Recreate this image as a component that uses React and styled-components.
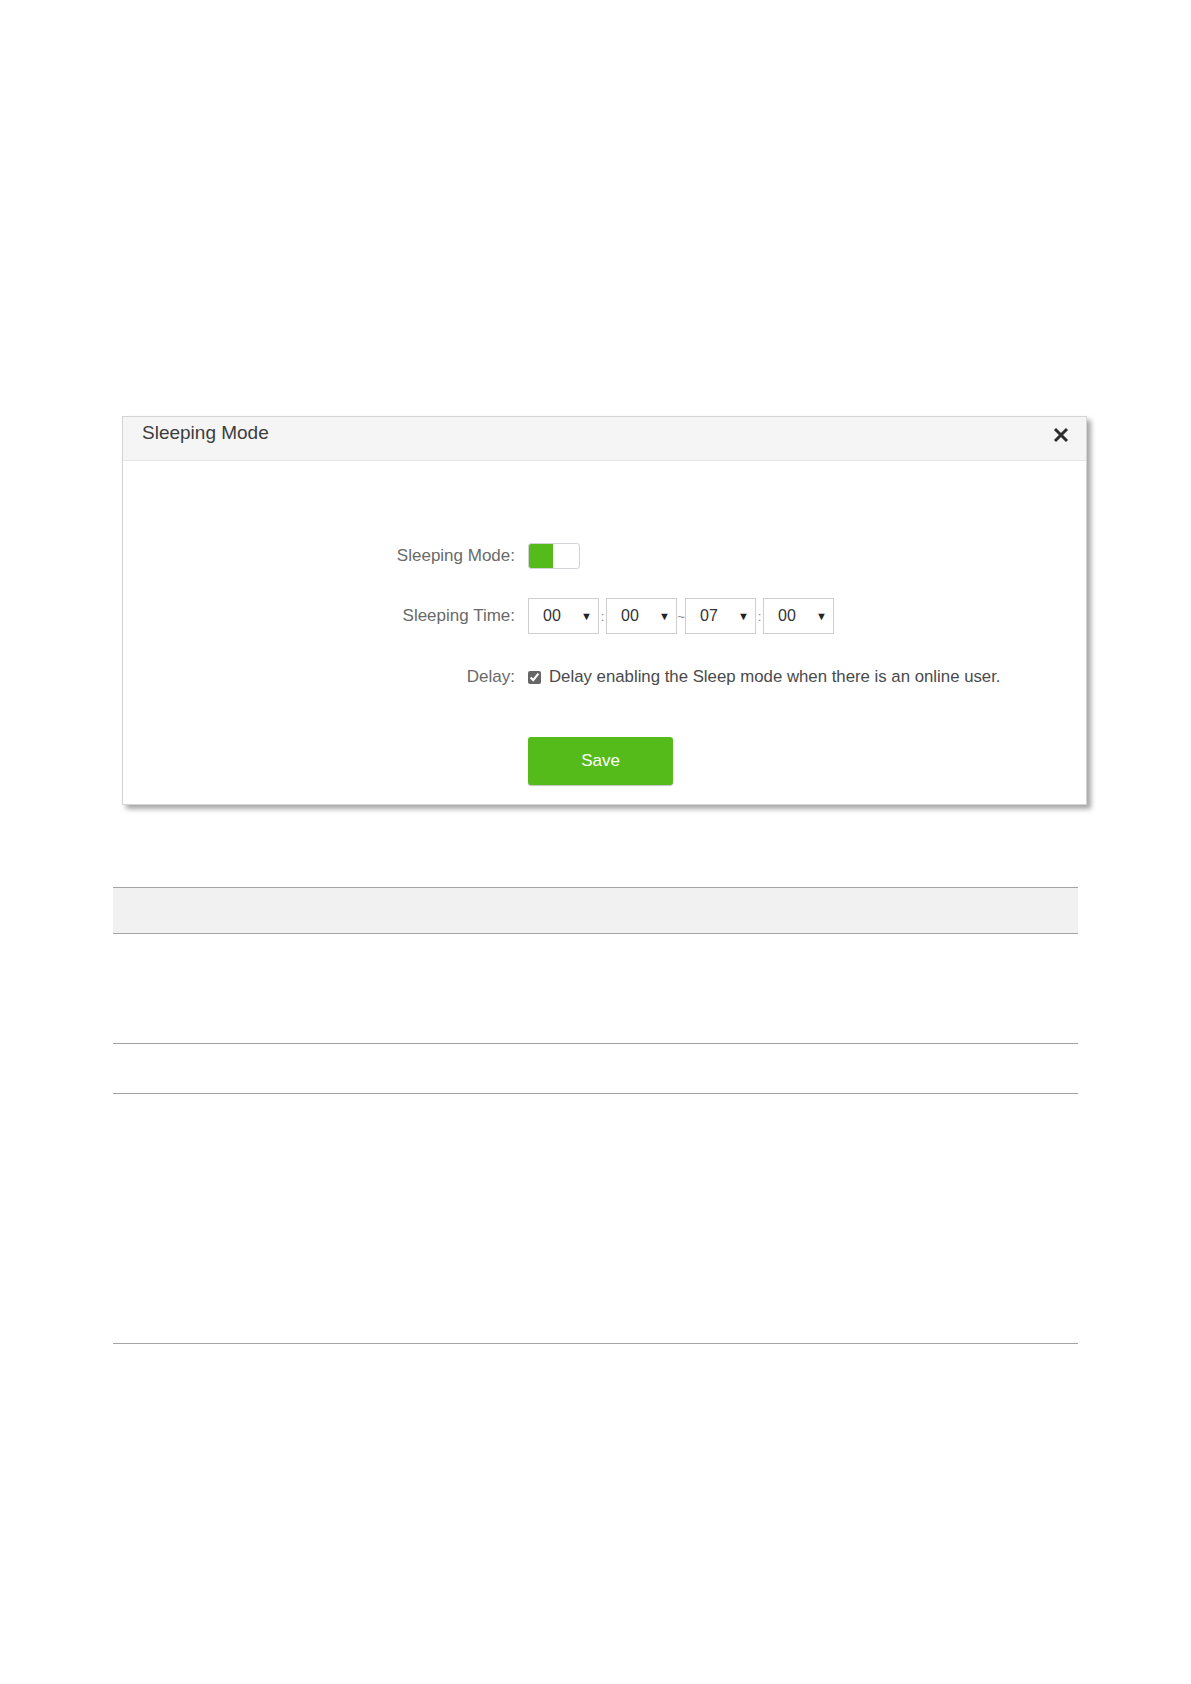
import React from "react";
import styled, { createGlobalStyle } from "styled-components";

const GlobalStyle = createGlobalStyle`
  html, body {
    margin: 0;
    padding: 0;
    background: #ffffff;
  }
  body {
    font-family: "Liberation Sans", Arial, sans-serif;
  }
`;

const Page = styled.div`
  width: 1191px;
  min-height: 1684px;
  display: flex;
  flex-direction: column;
  padding-top: 416px;
  box-sizing: border-box;
`;

const Dialog = styled.div`
  margin-left: 122px;
  width: 965px;
  box-sizing: border-box;
  border: 1px solid #d4d4d4;
  background: #fff;
  box-shadow: 4px 4px 5px rgba(0, 0, 0, 0.35);
`;

const Header = styled.div`
  height: 43px;
  display: flex;
  align-items: center;
  justify-content: space-between;
  padding: 0 16px 0 19px;
  background: #f5f5f5;
  border-bottom: 1px solid #e6e6e6;
`;

const Title = styled.h2`
  margin: 0;
  margin-top: -11px;
  font-size: 19px;
  font-weight: normal;
  color: #3d3d3d;
`;

const Close = styled.button`
  border: none;
  background: none;
  padding: 0;
  margin-top: -7px;
  width: 18px;
  height: 18px;
  display: flex;
  align-items: center;
  justify-content: center;
  cursor: pointer;
`;

const Body = styled.div`
  padding: 77px 0 19px;
`;

const Form = styled.div`
  display: grid;
  grid-template-columns: 392px 1fr;
  column-gap: 13px;
`;

const Row = styled.div`
  display: contents;
`;

const Label = styled.div`
  height: 36px;
  margin-bottom: ${(p) => p.$gap || 24}px;
  display: flex;
  align-items: center;
  justify-content: flex-end;
  font-size: 17px;
  color: #6a6a6a;
`;

const Field = styled.div`
  height: 36px;
  margin-bottom: ${(p) => p.$gap || 24}px;
  display: flex;
  align-items: center;
`;

const Toggle = styled.div`
  width: 50px;
  height: 24px;
  border: 1px solid #d0d4d8;
  border-radius: 3px;
  overflow: hidden;
  display: flex;
  background: #fff;
`;

const ToggleOn = styled.div`
  width: 24px;
  background: #55bb1a;
`;

const Select = styled.div`
  width: 71px;
  height: 36px;
  box-sizing: border-box;
  border: 1px solid #cfcfcf;
  display: flex;
  align-items: center;
  justify-content: space-between;
  padding: 0 6px 0 14px;
  font-size: 16px;
  color: #333;
  background: #fff;
`;

const Arrow = styled.span`
  font-size: 11px;
  color: #222;
`;

const Sep = styled.span`
  width: ${(p) => p.$w || 7}px;
  text-align: center;
  font-size: 13px;
  color: #888;
`;

const Check = styled.input`
  width: 13px;
  height: 13px;
  margin: 0 8px 0 0;
  accent-color: #666;
`;

const DelayText = styled.span`
  font-size: 16.8px;
  color: #4a4a4a;
`;

const SaveButton = styled.button`
  width: 145px;
  height: 48px;
  border: none;
  border-radius: 3px;
  background: #55bb1a;
  box-shadow: 0 1px 1px rgba(0, 0, 0, 0.25);
  color: #fff;
  font-family: inherit;
  font-size: 17px;
  cursor: pointer;
`;

const Table = styled.table`
  margin: 82px 0 0 113px;
  width: 965px;
  border-collapse: collapse;
`;

const Cell = styled.td`
  height: ${(p) => p.$h}px;
  padding: 0;
  border-top: 1px solid #a3a3a3;
  border-bottom: 1px solid #a3a3a3;
  background: ${(p) => (p.$head ? "#f1f1f1" : "#fff")};
`;

const times = ["00", "00", "07", "00"];
const seps = [":", "~", ":"];

const App = () => {
  return (
    <>
      <GlobalStyle />
      <Page>
        <Dialog>
          <Header>
            <Title>Sleeping Mode</Title>
            <Close aria-label="close">
              <svg width="16" height="16" viewBox="0 0 16 16">
                <path d="M2 2 L14 14 M14 2 L2 14" stroke="#2e2e2e" strokeWidth="3" strokeLinecap="butt" />
              </svg>
            </Close>
          </Header>
          <Body>
            <Form>
              <Row>
                <Label>Sleeping Mode:</Label>
                <Field>
                  <Toggle>
                    <ToggleOn />
                  </Toggle>
                </Field>
              </Row>
              <Row>
                <Label $gap={25}>Sleeping Time:</Label>
                <Field $gap={25}>
                  {times.map((t, i) => (
                    <React.Fragment key={i}>
                      <Select>
                        {t}
                        <Arrow>▼</Arrow>
                      </Select>
                      {i < 3 && <Sep $w={seps[i] === "~" ? 8 : 7}>{seps[i]}</Sep>}
                    </React.Fragment>
                  ))}
                </Field>
              </Row>
              <Row>
                <Label $gap={42}>Delay:</Label>
                <Field $gap={42}>
                  <Check type="checkbox" defaultChecked />
                  <DelayText>Delay enabling the Sleep mode when there is an online user.</DelayText>
                </Field>
              </Row>
              <Row>
                <div />
                <div>
                  <SaveButton>Save</SaveButton>
                </div>
              </Row>
            </Form>
          </Body>
        </Dialog>
        <Table>
          <tbody>
            <tr><Cell $head $h={45} /></tr>
            <tr><Cell $h={109} /></tr>
            <tr><Cell $h={49} /></tr>
            <tr><Cell $h={249} /></tr>
          </tbody>
        </Table>
      </Page>
    </>
  );
};

export default App;
